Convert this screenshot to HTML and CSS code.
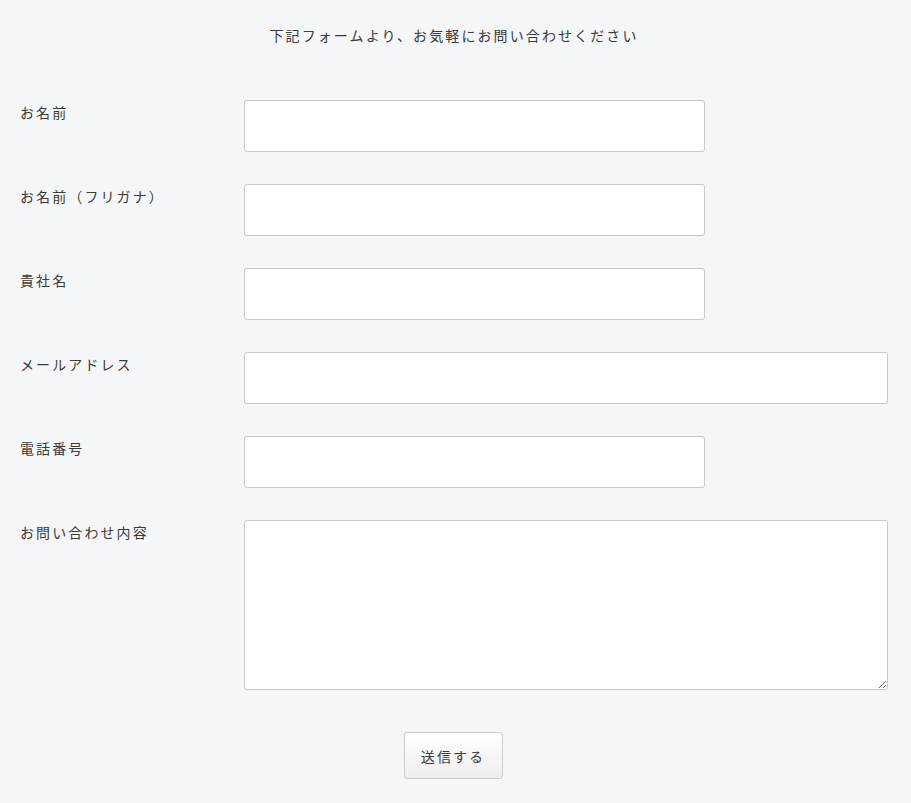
FILE: index.html
```html
<!DOCTYPE html>
<html>
  <head>
    <meta charset="utf-8">
    <title>お問い合わせ</title>
    <link rel="stylesheet" href="styles.css">
  </head>
  <body>
    <p class="lead">下記フォームより、お気軽にお問い合わせください</p>

    <form class="contact" action="" onsubmit="return false" novalidate>
      <div class="row">
        <label for="name">お名前</label>
        <input type="text" id="name" name="name" class="field">
      </div>
      <div class="row">
        <label for="kana">お名前（フリガナ）</label>
        <input type="text" id="kana" name="kana" class="field">
      </div>
      <div class="row">
        <label for="company">貴社名</label>
        <input type="text" id="company" name="company" class="field">
      </div>
      <div class="row">
        <label for="email">メールアドレス</label>
        <input type="email" id="email" name="email" class="field field-wide">
      </div>
      <div class="row">
        <label for="tel">電話番号</label>
        <input type="tel" id="tel" name="tel" class="field">
      </div>
      <div class="row">
        <label for="message">お問い合わせ内容</label>
        <textarea id="message" name="message" class="field field-wide field-area"></textarea>
      </div>

      <div class="actions">
        <button type="submit">送信する</button>
      </div>
    </form>
  </body>
</html>
```

FILE: styles.css
```css
body,
p,
form,
label,
input,
textarea,
button {
  margin: 0;
  padding: 0;
  box-sizing: border-box;
}

/* Page */
body {
  background: #f5f6f8;
  color: #3a3a3a;
  padding: 23px 23px 0 20px;
  font-family: "Noto Sans CJK JP", "Noto Sans", sans-serif;
  font-size: 14px;
  letter-spacing: 2.1px;
}

.lead {
  line-height: 24px;
  text-align: center;
}

/* Form */
.contact {
  margin-top: 53px;
}

.row {
  display: grid;
  grid-template-columns: 224px 1fr;
  align-items: start;
  margin-bottom: 32px;
}

label {
  line-height: 24px;
}

.field {
  width: 461px;
  height: 52px;
  border: 1px solid #c8c8c8;
  border-radius: 3px;
  background: #fff;
  font: inherit;
  padding: 8px 10px;
}

.field:focus {
  outline: none;
  border-color: #999;
}

.field-wide {
  width: 100%;
}

.field-area {
  height: 170px;
  resize: vertical;
}

/* margin collapses with the row above, so this is the full gap */
.actions {
  display: flex;
  justify-content: center;
  margin-top: 42px;
  padding-right: 2px;
}

button {
  width: 99px;
  height: 47px;
  border: 1px solid #ccc;
  border-radius: 3px;
  background: linear-gradient(#fff, #eee);
  color: #3a3a3a;
  font: inherit;
  letter-spacing: 2.1px;
  cursor: pointer;
}

button:hover {
  background: #f0f0f0;
}
```
